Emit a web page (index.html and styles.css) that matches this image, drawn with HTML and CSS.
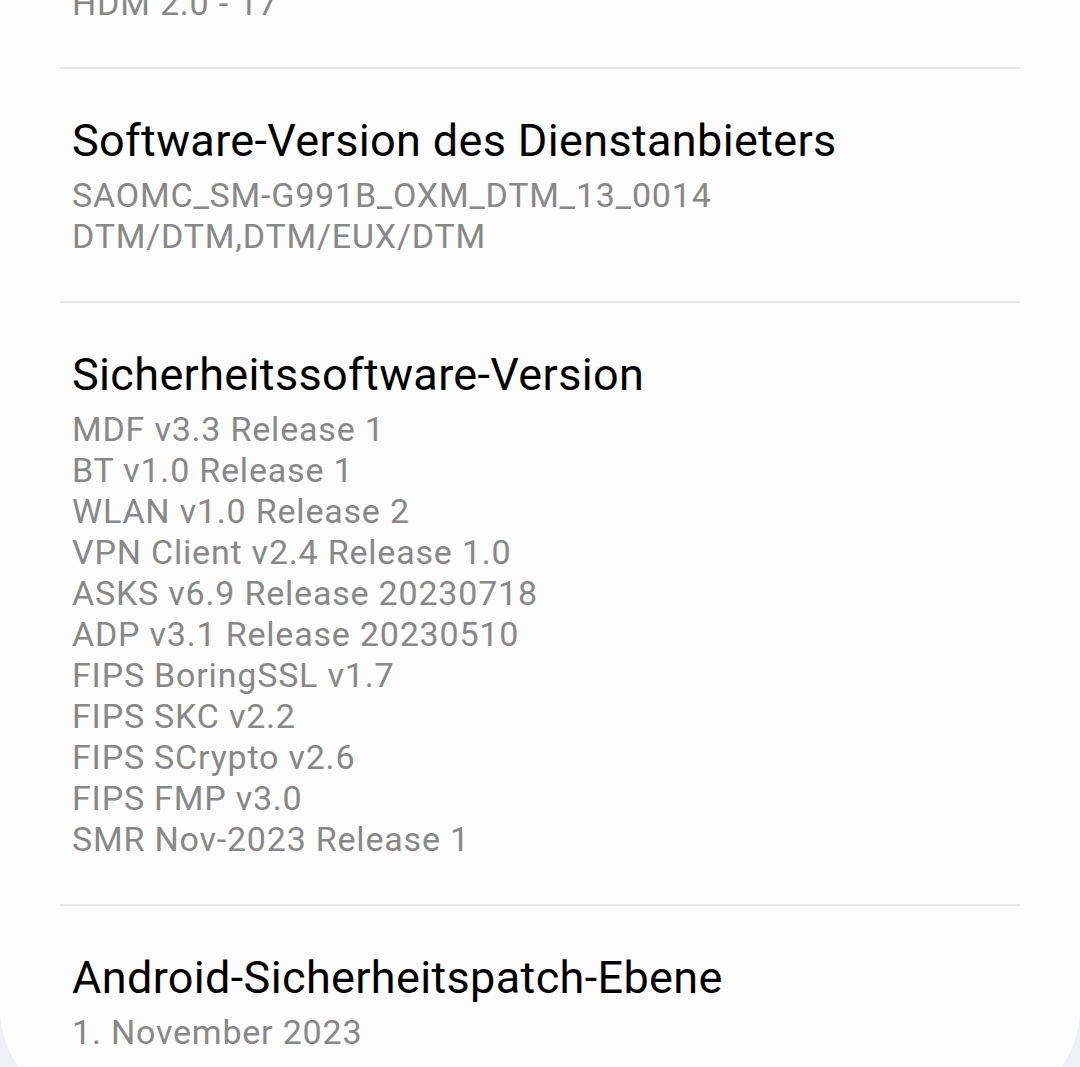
FILE: index.html
```html
<!DOCTYPE html>
<html lang="de">
<head>
    <meta charset="UTF-8">
    <meta name="viewport" content="width=device-width, initial-scale=1.0">
    <title>Softwareinformationen</title>
    <link rel="stylesheet" href="styles.css">
</head>
<body>
    <div class="card">
        <div class="tail">
            <p class="sub">HDM 2.0 - 17</p>
        </div>

        <div class="item">
            <h2 class="title">Software-Version des Dienstanbieters</h2>
            <p class="sub">SAOMC_SM-G991B_OXM_DTM_13_0014</p>
            <p class="sub">DTM/DTM,DTM/EUX/DTM</p>
        </div>

        <div class="item">
            <h2 class="title">Sicherheitssoftware-Version</h2>
            <p class="sub">MDF v3.3 Release 1</p>
            <p class="sub">BT v1.0 Release 1</p>
            <p class="sub">WLAN v1.0 Release 2</p>
            <p class="sub">VPN Client v2.4 Release 1.0</p>
            <p class="sub">ASKS v6.9 Release 20230718</p>
            <p class="sub">ADP v3.1 Release 20230510</p>
            <p class="sub">FIPS BoringSSL v1.7</p>
            <p class="sub">FIPS SKC v2.2</p>
            <p class="sub">FIPS SCrypto v2.6</p>
            <p class="sub">FIPS FMP v3.0</p>
            <p class="sub">SMR Nov-2023 Release 1</p>
        </div>

        <div class="item last">
            <h2 class="title">Android-Sicherheitspatch-Ebene</h2>
            <p class="sub">1. November 2023</p>
        </div>
    </div>
</body>
</html>
```

FILE: styles.css
```css
html, body {
    overflow: hidden;
}

body {
    margin: 0;
    padding: 0;
    font-family: Roboto, "Noto Sans", sans-serif;
    background-color: #eef0f3;
}

.card {
    background-color: #fcfcfc;
    border-radius: 0 0 100px 100px;
    padding: 0 60px 56px;
}

.tail {
    margin-top: -17px;
    padding: 0 12px 43px;
}

.item {
    border-top: 2px solid #e6e6e6;
    padding: 44px 12px 44px;
}

.item.last {
    padding-bottom: 0;
}

.title {
    margin: 0 0 6px;
    font-size: 45px;
    font-weight: 400;
    line-height: 56px;
    letter-spacing: 0.35px;
    color: #000000;
}

.sub {
    margin: 0;
    font-size: 34px;
    line-height: 41px;
    letter-spacing: 0.8px;
    color: #888888;
}
```
